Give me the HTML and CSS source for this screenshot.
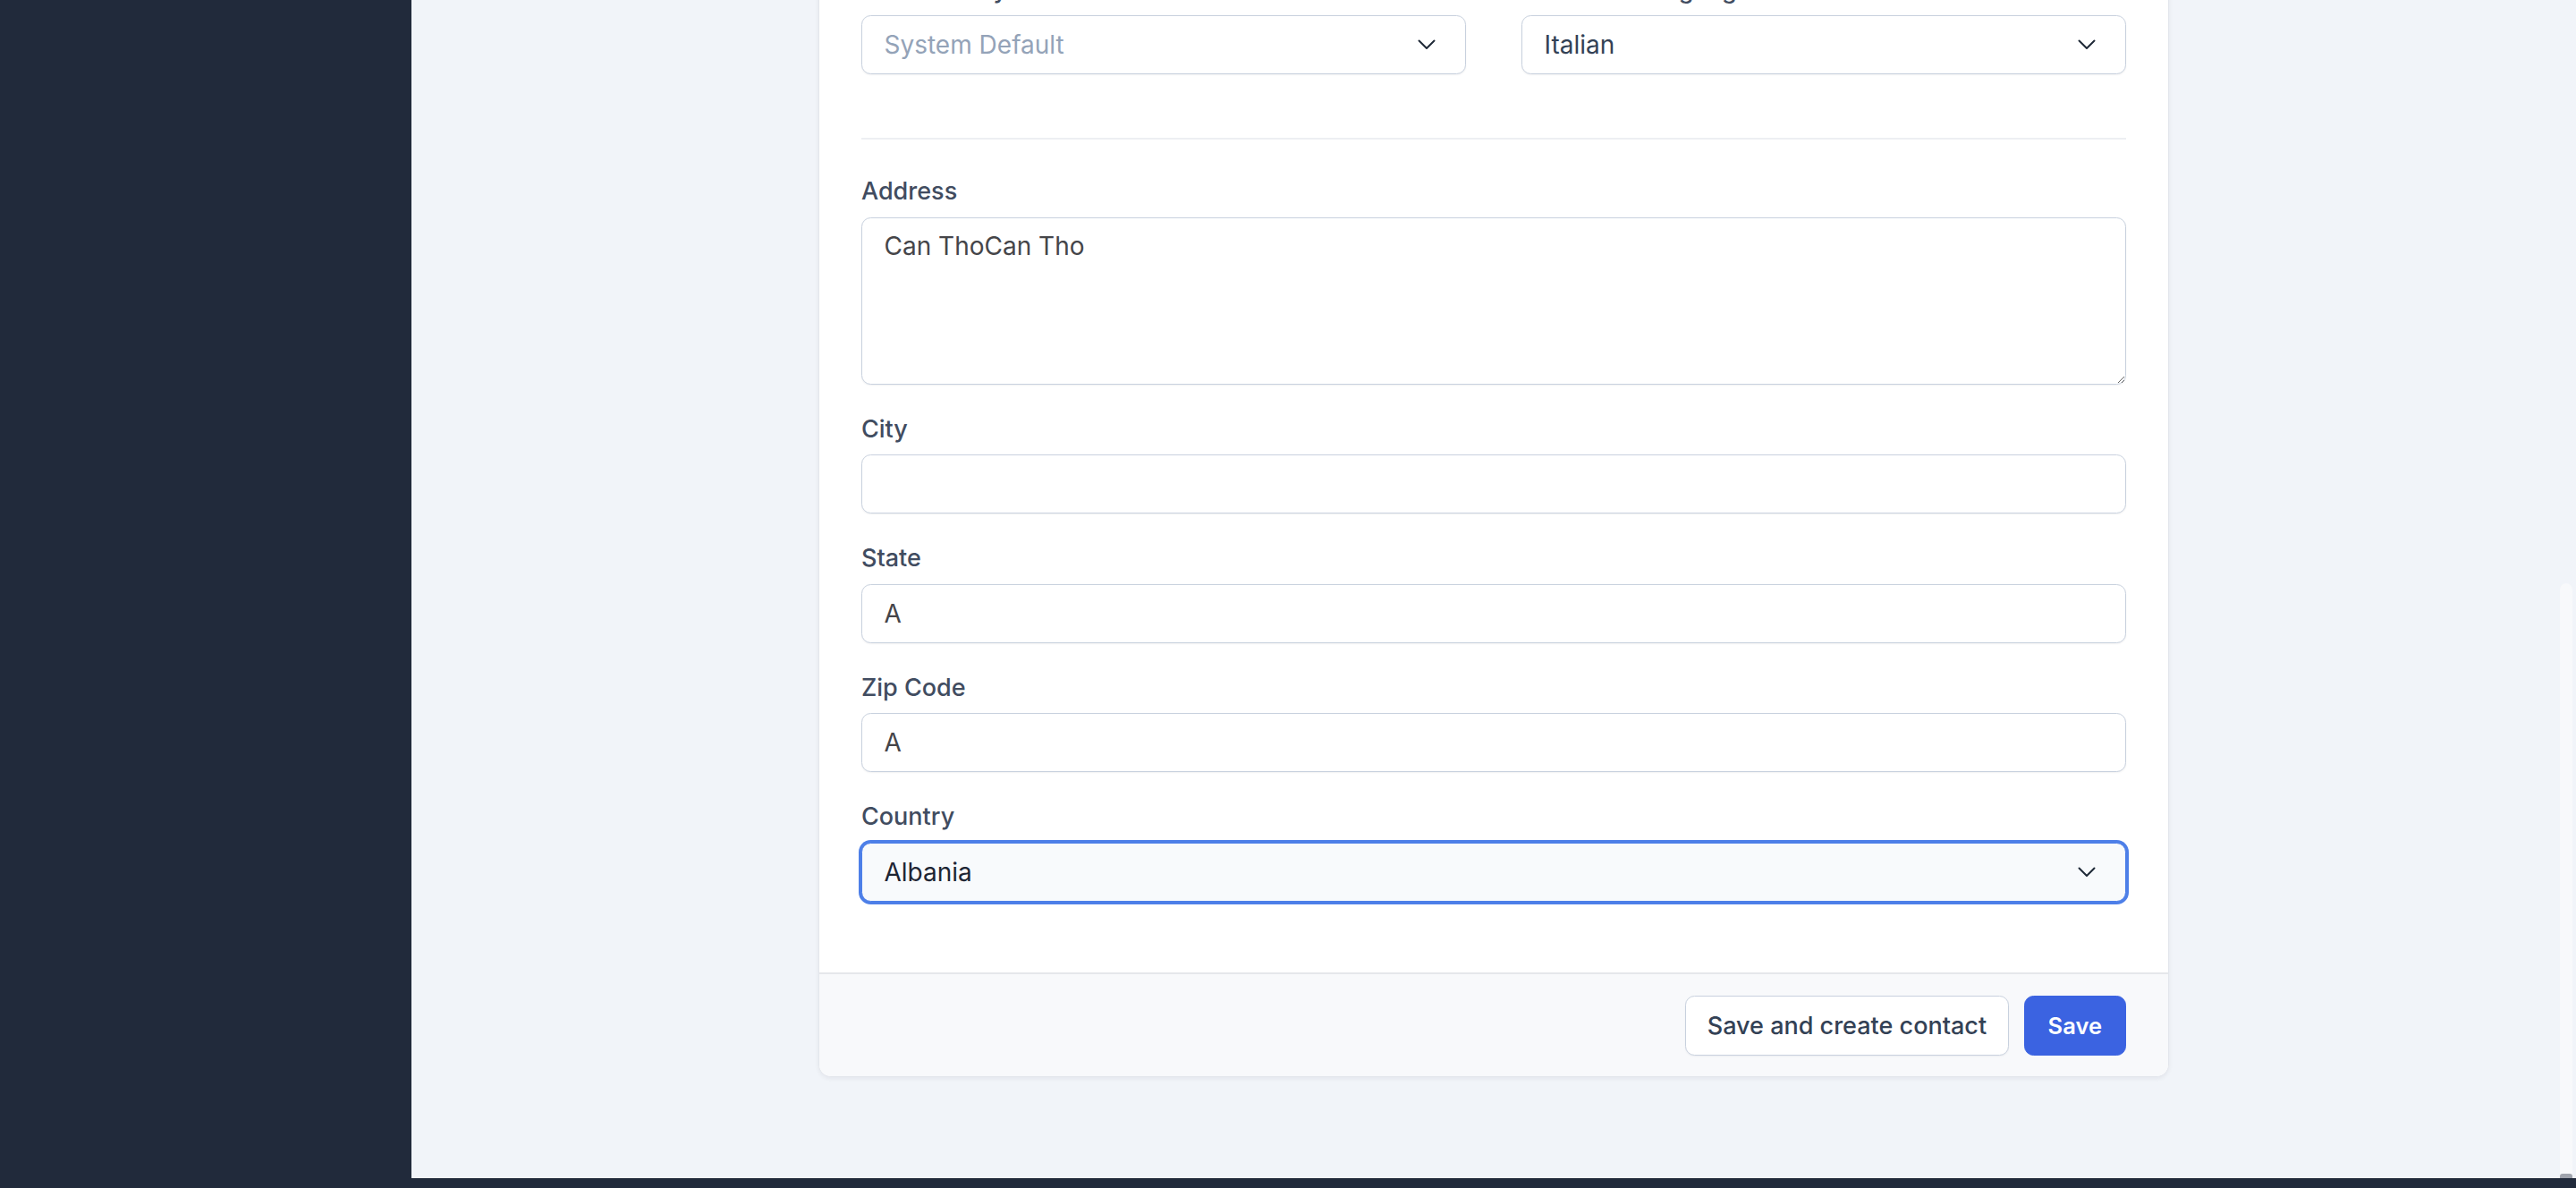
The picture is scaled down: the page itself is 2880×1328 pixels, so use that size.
FILE: index.html
```html
<!DOCTYPE html>
<html lang="en">
<head>
<meta charset="utf-8">
<title>Edit Customer</title>
<link rel="stylesheet" href="styles.css">
</head>
<body>
<div class="app">
  <aside class="sidebar"></aside>
  <main class="main">
    <form class="card">
      <div class="card-body">
        <div class="two-col">
          <div class="field">
            <label class="label">Credit Policy</label>
            <div class="select">
              <span class="placeholder">System Default</span>
              <svg class="chev" width="20" height="12" viewBox="0 0 20 12"><polyline points="1.5,1.5 10,10 18.5,1.5" fill="none" stroke="#1f2937" stroke-width="2" stroke-linecap="round" stroke-linejoin="round"/></svg>
            </div>
          </div>
          <div class="field">
            <label class="label">Preferred Language</label>
            <div class="select">
              <span class="value-dark">Italian</span>
              <svg class="chev" width="20" height="12" viewBox="0 0 20 12"><polyline points="1.5,1.5 10,10 18.5,1.5" fill="none" stroke="#1f2937" stroke-width="2" stroke-linecap="round" stroke-linejoin="round"/></svg>
            </div>
          </div>
        </div>

        <hr class="divider">

        <div class="stack">
          <div class="field">
            <label class="label" for="address">Address</label>
            <textarea id="address" class="textarea">Can ThoCan Tho</textarea>
          </div>
          <div class="field">
            <label class="label" for="city">City</label>
            <input id="city" class="input" type="text" value="">
          </div>
          <div class="field">
            <label class="label" for="state">State</label>
            <input id="state" class="input" type="text" value="A">
          </div>
          <div class="field">
            <label class="label" for="zip">Zip Code</label>
            <input id="zip" class="input" type="text" value="A">
          </div>
          <div class="field">
            <label class="label">Country</label>
            <div class="select select-focus">
              <span class="value-darker">Albania</span>
              <svg class="chev" width="20" height="12" viewBox="0 0 20 12"><polyline points="1.5,1.5 10,10 18.5,1.5" fill="none" stroke="#1f2937" stroke-width="2" stroke-linecap="round" stroke-linejoin="round"/></svg>
            </div>
          </div>
        </div>
      </div>
      <div class="card-footer">
        <button type="button" class="btn btn-secondary">Save and create contact</button>
        <button type="button" class="btn btn-primary">Save</button>
      </div>
    </form>
    <div class="scrollbar"><div class="scroll-cap"></div></div>
  </main>
</div>
</body>
</html>
```

FILE: styles.css
```css
* { box-sizing: border-box; }

html, body {
  margin: 0;
  padding: 0;
  height: 100%;
}

body {
  background: #212a3b;
  font-family: "Inter", "Noto Sans", "Liberation Sans", sans-serif;
  overflow: hidden;
}

.app {
  display: flex;
  height: 1328px;
}

.sidebar {
  width: 460px;
  flex: 0 0 460px;
  background: #212a3b;
}

.main {
  position: relative;
  flex: 1;
  height: 1317px;
  background: #f1f4f9;
  overflow: hidden;
}

.card {
  width: 1510px;
  margin: -79px auto 0;
  background: #ffffff;
  border: 1px solid #e3e6ec;
  border-radius: 14px;
  box-shadow: 0 2px 5px rgba(15, 23, 42, 0.06);
  overflow: hidden;
}

.card-body {
  padding: 48.5px 47px 79.5px;
}

.two-col {
  display: grid;
  grid-template-columns: 1fr 1fr;
  column-gap: 62px;
}

.field {
  display: flex;
  flex-direction: column;
}

.label {
  display: block;
  font-size: 27px;
  line-height: 35px;
  font-weight: 500;
  color: #414c60;
  margin-bottom: 11.5px;
  white-space: nowrap;
}

.select {
  height: 66px;
  border: 1.5px solid #c8d1de;
  border-radius: 10.5px;
  background: #ffffff;
  box-shadow: 0 1px 2px rgba(15, 23, 42, 0.06);
  display: flex;
  align-items: center;
  justify-content: space-between;
  padding: 0 33px 0 24.5px;
  font-size: 28px;
}

.select-focus {
  background: #f8fafc;
  border-color: #4d7fe8;
  box-shadow: 0 0 0 3px #4d7fe8;
}

.chev {
  display: block;
  flex: 0 0 auto;
}

.placeholder { color: #94a3b8; }
.value-dark { color: #334155; }
.value-darker { color: #1e2533; }

.divider {
  border: 0;
  border-top: 2px solid #edeff2;
  margin: 71px 0 40.3px;
  height: 0;
}

.stack {
  display: flex;
  flex-direction: column;
  gap: 32px;
}

.input,
.textarea {
  width: 100%;
  border: 1.5px solid #c8d1de;
  border-radius: 10.5px;
  background: #ffffff;
  box-shadow: 0 1px 2px rgba(15, 23, 42, 0.06);
  font-family: "Inter", "Noto Sans", "Liberation Sans", sans-serif;
  font-size: 28px;
  color: #454549;
  outline: none;
  margin: 0;
}

.input {
  height: 66px;
  padding: 0 24.5px;
}

.textarea {
  display: block;
  height: 187px;
  padding: 14.5px 24.5px 13px;
  line-height: 35px;
  resize: vertical;
}

.card-footer {
  background: #f8f9fb;
  border-top: 2px solid #e5e7eb;
  padding: 24px 47px 23px;
  display: flex;
  justify-content: flex-end;
  gap: 17px;
}

.btn {
  height: 67px;
  border-radius: 10.5px;
  font-family: "Inter", "Noto Sans", "Liberation Sans", sans-serif;
  line-height: 35px;
  cursor: pointer;
  margin: 0;
}

.btn-secondary {
  background: #ffffff;
  border: 1.5px solid #c8d1de;
  color: #334155;
  font-size: 27px;
  font-weight: 500;
  padding: 0 23.5px;
  box-shadow: 0 1px 2px rgba(15, 23, 42, 0.05);
}

.btn-primary {
  background: #3b63e1;
  border: 1px solid #3b63e1;
  color: #ffffff;
  font-size: 25.5px;
  font-weight: 600;
  padding: 0 26px;
}

.scrollbar {
  position: absolute;
  right: 4px;
  top: 652px;
  bottom: 0;
  width: 14px;
  background: #f8f9fb;
  border-radius: 7px 7px 0 0;
}

.scroll-cap {
  position: absolute;
  left: 0;
  right: 0;
  bottom: 0;
  height: 5px;
  background: #a0a4ad;
  border-radius: 3px 3px 0 0;
}
```
